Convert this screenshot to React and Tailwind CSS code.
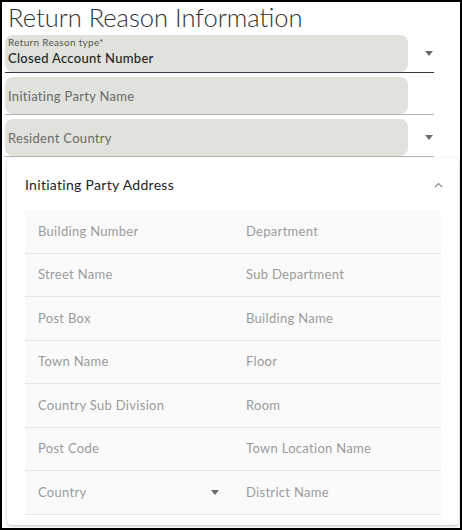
const ADDRESS_FIELDS = [
  ["Building Number", "Department"],
  ["Street Name", "Sub Department"],
  ["Post Box", "Building Name"],
  ["Town Name", "Floor"],
  ["Country Sub Division", "Room"],
  ["Post Code", "Town Location Name"],
  ["Country", "District Name"],
];

const Caret = () => (
  <svg width="8" height="5" viewBox="0 0 8 5" className="fill-[#6b6b6b]">
    <path d="M0 0 L8 0 L4 5 Z" />
  </svg>
);

const FilledField = ({ label, value, placeholder, select, active }) => (
  <div className={`flex items-stretch w-[429px] border-b ${active ? "border-[#3a3a3a]" : "border-[#b3b3b3]"}`}>
    {label ? (
      <div className="w-[403px] h-[37px] rounded-lg bg-[#dfe3dc] px-[3px] pt-[1px]">
        <div className="text-[10px] leading-[12px] text-[#555]">{label}</div>
        <div className="mt-[2px] text-[13px] leading-[16px] text-[#1e1e1e] font-medium">{value}</div>
      </div>
    ) : (
      <div className="w-[403px] h-[37px] rounded-lg bg-[#dfe3dc] px-[3px] flex items-center">
        <div className="text-[13px] leading-[16px] text-[#6a6a6a]">{placeholder}</div>
      </div>
    )}
    <div className="flex-1 flex items-center justify-end pr-[1px]">
      {select && <Caret />}
    </div>
  </div>
);

export default function App() {
  return (
    <div className="w-[462px] h-[530px] border-2 border-black bg-white overflow-hidden font-['Lato',sans-serif] tracking-[0.3px]">
      <h1 className="text-[25.5px] leading-[28px] text-[#333] pl-[6px] pt-[1px] font-light tracking-normal">Return Reason Information</h1>
      <div className="pl-[3px] pt-[4px] flex flex-col gap-[4px]">
        <FilledField label="Return Reason type*" value="Closed Account Number" select active />
        <FilledField placeholder="Initiating Party Name" />
        <FilledField placeholder="Resident Country" select />
      </div>
      <div className="ml-[5px] mt-[1px] w-[452px] h-[367px] bg-white rounded-sm shadow-[0_1px_3px_rgba(0,0,0,0.25)] px-[18px]">
        <div className="h-[52px] flex items-center justify-between pt-[1px]">
          <span className="text-[14px] text-[#222]">Initiating Party Address</span>
          <svg width="9" height="6" viewBox="0 0 9 6" className="stroke-[#888] fill-none mr-[-2px]">
            <path d="M1 5 L4.5 1.5 L8 5" strokeWidth="1.2" />
          </svg>
        </div>
        <div className="grid grid-cols-2 bg-[#fafafa]">
          {ADDRESS_FIELDS.flat().map((name) => (
            <div key={name} className="h-[43.5px] border-b border-[#e6e6e6] flex items-center justify-between pl-[13px] pr-[14px] text-[13px] text-[#9a9a9a]">
              <span>{name}</span>
              {name === "Country" && <Caret />}
            </div>
          ))}
        </div>
      </div>
    </div>
  );
}
